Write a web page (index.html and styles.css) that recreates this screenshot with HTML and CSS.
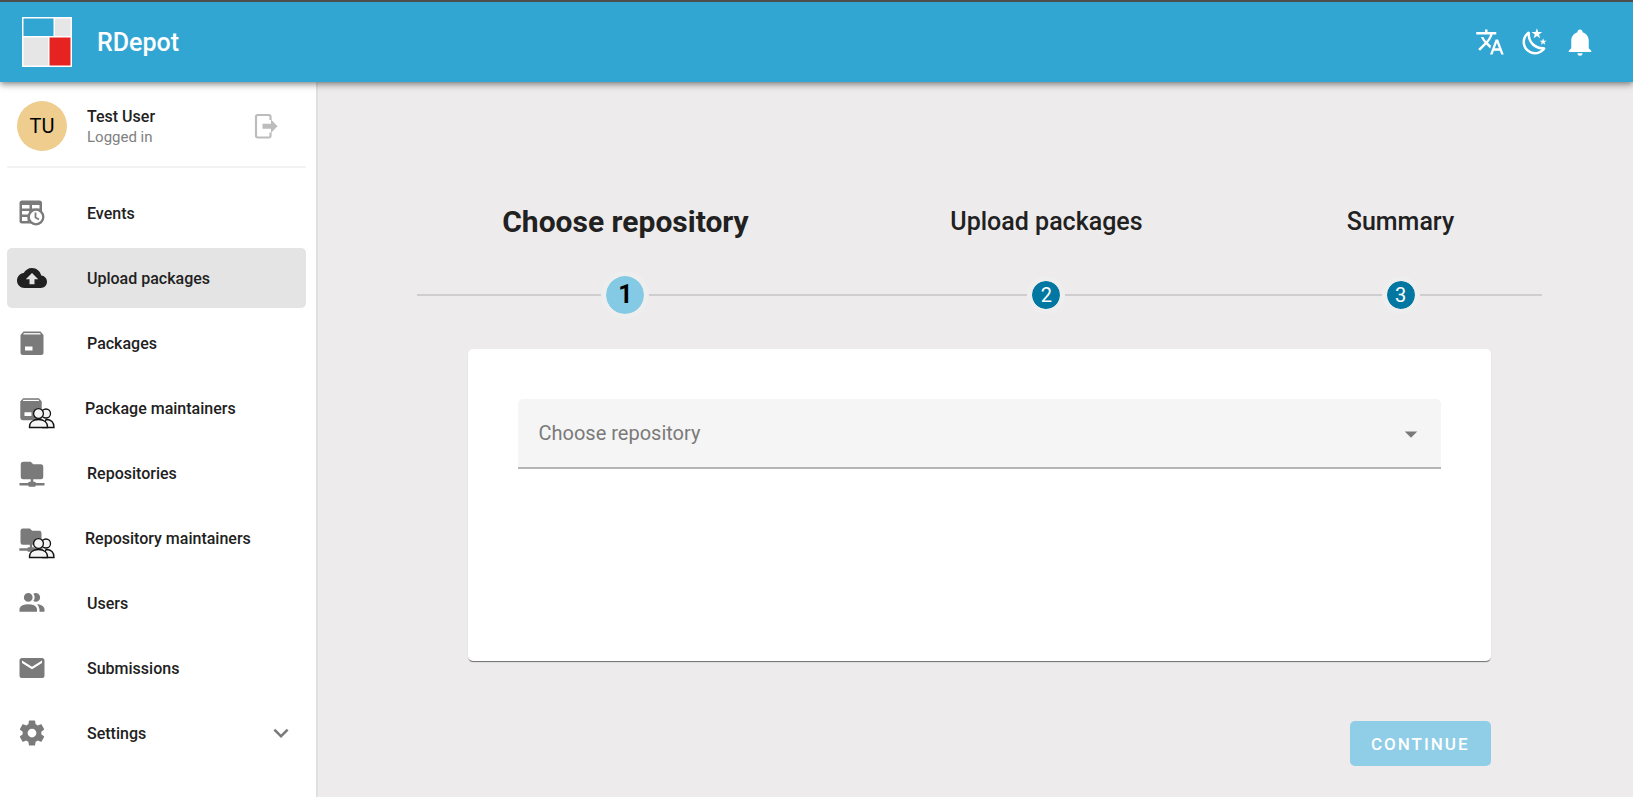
FILE: index.html
```html
<!DOCTYPE html>
<html lang="en">
<head>
  <meta charset="UTF-8">
  <meta name="viewport" content="width=device-width, initial-scale=1.0">
  <title>RDepot</title>
  <link rel="stylesheet" href="styles.css">
</head>
<body>

  <!-- shapes used by more than one icon -->
  <svg class="sprite" aria-hidden="true">
    <symbol id="box" viewBox="0 0 30 30">
      <path d="M6.5 3.5H23.5L26.5 7V24.500A2.500 2.500 0 0 1 24 27H6A2.500 2.500 0 0 1 3.500 24.500V7Z"/>
      <path d="M6.500 5.800H23.500" stroke="#fff" stroke-width="1.300"/>
      <path d="M8 18.500H15.500V22.500H8Z" fill="#fff"/>
    </symbol>
    <symbol id="folder" viewBox="0 0 24 24">
      <path d="M3 15V5A2 2 0 0 1 5 3H11L13 5H19A2 2 0 0 1 21 7V15A2 2 0 0 1 19 17H13V19H14A1 1 0 0 1 15 20H22V22H15A1 1 0 0 1 14 23H10A1 1 0 0 1 9 22H2V20H9A1 1 0 0 1 10 19H11V17H5A2 2 0 0 1 3 15Z"/>
    </symbol>
    <symbol id="people" viewBox="0 0 28 22">
      <g fill="#f5f5f5" stroke="#111" stroke-width="1.300">
        <circle cx="18" cy="6.500" r="4.500"/>
        <path d="M15 20.500H26C26 16 23.500 12.500 18 12.500Z"/>
        <circle cx="10.500" cy="6.500" r="4.900"/>
        <path d="M1.500 20.500C1 15.500 5 12.500 10.500 12.500S20 15.500 19.500 20.500Z"/>
      </g>
    </symbol>
  </svg>

  <header class="app-bar">
    <svg class="logo" viewBox="0 0 50 50" aria-hidden="true">
      <rect width="50" height="50" fill="#fff"/>
      <rect x="1.500" y="1.500" width="30" height="17.500" fill="#32a6d3"/>
      <rect x="33" y="1.500" width="15.500" height="17.500" fill="#e6e6e6"/>
      <rect x="1.500" y="20.500" width="24.500" height="28" fill="#e6e6e6"/>
      <rect x="27.500" y="20.500" width="21" height="28" fill="#e52421"/>
    </svg>
    <h1 class="app-title">RDepot</h1>
    <div class="app-actions">
      <button class="icon-button" type="button" aria-label="Change language">
        <svg class="icon" viewBox="0 0 24 24"><path d="M12.870 15.070L10.330 12.560L10.360 12.530C12.100 10.590 13.340 8.360 14.070 6H17V4H10V2H8V4H1V6H12.170C11.500 7.920 10.440 9.750 9 11.350C8.070 10.320 7.300 9.190 6.690 8H4.690C5.420 9.630 6.420 11.170 7.670 12.560L2.580 17.580L4 19L9 14L12.110 17.110L12.870 15.070M18.500 10H16.500L12 22H14L15.120 19H19.870L21 22H23L18.500 10M15.880 17L17.500 12.670L19.120 17H15.880Z"/></svg>
      </button>
      <button class="icon-button" type="button" aria-label="Dark mode">
        <svg class="icon" viewBox="0 0 24 24"><path d="M17.750 4.090L15.220 6.030L16.130 9.090L13.500 7.280L10.870 9.090L11.780 6.030L9.250 4.090L12.440 4L13.500 1L14.560 4L17.750 4.090M21.250 11L19.610 12.250L20.200 14.230L18.500 13.060L16.800 14.230L17.390 12.250L15.750 11L17.810 10.950L18.500 9L19.190 10.950L21.250 11M18.970 15.950C19.800 15.870 20.690 17.050 20.160 17.800C19.840 18.250 19.500 18.670 19.080 19.070C15.170 23 8.840 23 4.940 19.070C1.030 15.170 1.030 8.830 4.940 4.930C5.340 4.530 5.760 4.170 6.210 3.850C6.960 3.320 8.140 4.210 8.060 5.040C7.790 7.900 8.750 10.870 10.950 13.060C13.140 15.260 16.100 16.220 18.970 15.950M17.330 17.970C14.500 17.810 11.700 16.640 9.530 14.500C7.360 12.310 6.200 9.500 6.040 6.680C3.230 9.820 3.340 14.640 6.350 17.660C9.370 20.670 14.190 20.780 17.330 17.970Z"/></svg>
      </button>
      <button class="icon-button" type="button" aria-label="Notifications">
        <svg class="icon" viewBox="0 0 24 24"><path d="M21 19V20H3V19L5 17V11C5 7.900 7.030 5.170 10 4.290V4A2 2 0 0 1 14 4V4.290C16.970 5.170 19 7.900 19 11V17L21 19M14 21A2 2 0 0 1 10 21"/></svg>
      </button>
    </div>
  </header>

  <div class="layout">
    <aside class="sidebar">
      <div class="user">
        <span class="avatar">TU</span>
        <div class="user-text">
          <span class="user-name">Test User</span>
          <span class="user-status">Logged in</span>
        </div>
        <button class="icon-button logout" type="button" aria-label="Log out">
          <svg class="icon" viewBox="0 0 30 30">
            <path d="M19.500 9V5.500A1.500 1.500 0 0 0 18 4H6.500A1.500 1.500 0 0 0 5 5.500V25A1.500 1.500 0 0 0 6.500 26.500H18A1.500 1.500 0 0 0 19.500 25V21.500" fill="none" stroke="currentColor" stroke-width="2.200"/>
            <path d="M11.500 12.700H20V8.500L26.500 15.200L20 22V17.700H11.500Z"/>
          </svg>
        </button>
      </div>

      <nav class="menu">
        <a class="menu-item" href="#events">
          <svg class="icon" viewBox="0 0 30 30">
            <path d="M2.500 5A2.500 2.500 0 0 1 5 2.500H22.500A2.500 2.500 0 0 1 25 5V19H19V25.500H5A2.500 2.500 0 0 1 2.500 23Z"/>
            <path d="M5 7H12.500V10.500H5ZM15 7H22.500V10.500H15ZM5 13H12V16.500H5ZM5 19H10.500V23H5Z" fill="#fff"/>
            <circle cx="19" cy="19" r="8" fill="#fff"/>
            <circle cx="19" cy="19" r="7.300" fill="none" stroke="currentColor" stroke-width="2.300"/>
            <path d="M18.500 14.500V19.500L22 21.500" fill="none" stroke="currentColor" stroke-width="1.800"/>
          </svg>
          <span class="menu-text">Events</span>
        </a>
        <a class="menu-item active" href="#upload" aria-current="page">
          <svg class="icon" viewBox="0 0 24 24"><path d="M19.350 10.040C18.670 6.590 15.640 4 12 4 9.110 4 6.600 5.640 5.350 8.040 2.340 8.360 0 10.910 0 14c0 3.310 2.690 6 6 6h13c2.760 0 5-2.240 5-5 0-2.640-2.050-4.780-4.650-4.960zM14 13v4h-4v-4H7l5-5 5 5h-3z"/></svg>
          <span class="menu-text">Upload packages</span>
        </a>
        <a class="menu-item" href="#packages">
          <svg class="icon"><use href="#box"/></svg>
          <span class="menu-text">Packages</span>
        </a>
        <a class="menu-item" href="#package-maintainers">
          <span class="icon-pair">
            <svg class="icon-main"><use href="#box"/></svg>
            <svg class="icon-badge"><use href="#people"/></svg>
          </span>
          <span class="menu-text">Package maintainers</span>
        </a>
        <a class="menu-item" href="#repositories">
          <svg class="icon"><use href="#folder"/></svg>
          <span class="menu-text">Repositories</span>
        </a>
        <a class="menu-item" href="#repository-maintainers">
          <span class="icon-pair">
            <svg class="icon-main"><use href="#folder"/></svg>
            <svg class="icon-badge"><use href="#people"/></svg>
          </span>
          <span class="menu-text">Repository maintainers</span>
        </a>
        <a class="menu-item" href="#users">
          <svg class="icon" viewBox="0 0 24 24"><path d="M16 17V19H2V17S2 13 9 13 16 17 16 17M12.500 7.500A3.500 3.500 0 1 0 9 11A3.500 3.500 0 0 0 12.500 7.500M15.940 13A5.320 5.320 0 0 1 18 17V19H22V17S22 13.370 15.940 13M15 4A3.390 3.390 0 0 0 13.070 4.590A5 5 0 0 1 13.070 10.410A3.390 3.390 0 0 0 15 11A3.500 3.500 0 0 0 15 4Z"/></svg>
          <span class="menu-text">Users</span>
        </a>
        <a class="menu-item" href="#submissions">
          <svg class="icon" viewBox="0 0 24 24"><path d="M20 8L12 13L4 8V6L12 11L20 6M20 4H4C2.890 4 2 4.890 2 6V18A2 2 0 0 0 4 20H20A2 2 0 0 0 22 18V6C22 4.890 21.100 4 20 4Z"/></svg>
          <span class="menu-text">Submissions</span>
        </a>
        <a class="menu-item" href="#settings">
          <svg class="icon" viewBox="0 0 24 24"><path d="M12 15.500A3.500 3.500 0 0 1 8.500 12A3.500 3.500 0 0 1 12 8.500A3.500 3.500 0 0 1 15.500 12A3.500 3.500 0 0 1 12 15.500M19.430 12.970C19.470 12.650 19.500 12.330 19.500 12C19.500 11.670 19.470 11.340 19.430 11L21.540 9.370C21.730 9.220 21.780 8.950 21.660 8.730L19.660 5.270C19.540 5.050 19.270 4.960 19.050 5.050L16.560 6.050C16.040 5.660 15.500 5.320 14.870 5.070L14.500 2.420C14.460 2.180 14.250 2 14 2H10C9.750 2 9.540 2.180 9.500 2.420L9.130 5.070C8.500 5.320 7.960 5.660 7.440 6.050L4.950 5.050C4.730 4.960 4.460 5.050 4.340 5.270L2.340 8.730C2.210 8.950 2.270 9.220 2.460 9.370L4.570 11C4.530 11.340 4.500 11.670 4.500 12C4.500 12.330 4.530 12.650 4.570 12.970L2.460 14.630C2.270 14.780 2.210 15.050 2.340 15.270L4.340 18.730C4.460 18.950 4.730 19.030 4.950 18.950L7.440 17.940C7.960 18.340 8.500 18.680 9.130 18.930L9.500 21.580C9.540 21.820 9.750 22 10 22H14C14.250 22 14.460 21.820 14.500 21.580L14.870 18.930C15.500 18.670 16.040 18.340 16.560 17.940L19.050 18.950C19.270 19.030 19.540 18.950 19.660 18.730L21.660 15.270C21.780 15.050 21.730 14.780 21.540 14.630L19.430 12.970Z"/></svg>
          <span class="menu-text">Settings</span>
          <svg class="icon chevron" viewBox="0 0 24 24"><path d="M7.410 8.580L12 13.170L16.590 8.580L18 10L12 16L6 10L7.410 8.580Z"/></svg>
        </a>
      </nav>
    </aside>

    <main class="content">
      <div class="stepper">
        <ol class="steps">
          <li class="step current">
            <span class="step-title">Choose repository</span>
            <span class="step-track"><span class="step-badge">1</span></span>
          </li>
          <li class="step">
            <span class="step-title">Upload packages</span>
            <span class="step-track"><span class="step-badge">2</span></span>
          </li>
          <li class="step">
            <span class="step-title">Summary</span>
            <span class="step-track"><span class="step-badge">3</span></span>
          </li>
        </ol>

        <form class="step-form">
          <div class="card">
            <div class="field">
              <select class="field-select" aria-label="Choose repository">
                <option>Choose repository</option>
              </select>
              <svg class="icon field-arrow" viewBox="0 0 24 24"><path d="M7 10L12 15L17 10H7Z"/></svg>
            </div>
          </div>
          <button class="continue" type="button">CONTINUE</button>
        </form>
      </div>
    </main>
  </div>

</body>
</html>
```
FILE: styles.css
```css
* {
  box-sizing: border-box;
}

body {
  margin: 0;
  min-height: 100vh;
  display: flex;
  flex-direction: column;
  background-color: #edebec;
  color: #212121;
  font-family: Roboto, sans-serif;
  font-size: 16px;
}

.sprite {
  display: none;
}

.icon {
  width: 30px;
  height: 30px;
  flex: none;
  fill: currentColor;
}

.icon-button {
  display: flex;
  padding: 0;
  border: 0;
  background: none;
  color: inherit;
  cursor: pointer;
}

/* top bar */
.app-bar {
  display: flex;
  align-items: center;
  height: 82px;
  padding: 0 38px 0 22px;
  border-top: 2px solid #4d4d4d;
  background-color: #32a6d3;
  color: #fff;
  box-shadow: 0 2px 5px -1px rgba(0, 0, 0, 0.3), 0 4px 6px rgba(0, 0, 0, 0.15), 0 1px 10px rgba(0, 0, 0, 0.15);
  z-index: 1;
}

.logo {
  width: 50px;
  height: 50px;
}

.app-title {
  margin: 0 0 0 25px;
  font-size: 25px;
  font-weight: 500;
}

.app-actions {
  display: flex;
  gap: 15px;
  margin-left: auto;
}

.layout {
  display: flex;
  flex: 1;
}

/* sidebar */
.sidebar {
  width: 318px;
  flex: none;
  padding: 0 10px 0 7px;
  border-right: 2px solid #e0e0e0;
  background-color: #fff;
}

.user {
  display: flex;
  align-items: center;
  height: 86px;
  padding: 4px 25px 0 10px;
  border-bottom: 2px solid #f3f3f3;
}

.avatar {
  width: 50px;
  height: 50px;
  border-radius: 50%;
  background-color: #eecd8f;
  color: #000;
  font-size: 20px;
  line-height: 50px;
  text-align: center;
}

.user-text {
  display: flex;
  flex-direction: column;
  margin-left: 20px;
  padding-top: 2px;
  line-height: 20px;
}

.user-name {
  font-weight: 500;
}

.user-status {
  color: #808080;
  font-size: 15px;
}

.logout {
  margin-left: auto;
  color: #bcbcbc;
}

.menu {
  display: flex;
  flex-direction: column;
  gap: 5px;
  padding-top: 15px;
}

.menu-item {
  display: flex;
  align-items: center;
  height: 60px;
  padding: 0 10px;
  border-radius: 5px;
  color: #7a7a7a;
  text-decoration: none;
}

.menu-item.active {
  background-color: #e4e4e4;
  color: #212121;
}

.menu-text {
  margin-left: 40px;
  color: #212121;
  font-weight: 500;
}

.icon-pair {
  position: relative;
  width: 28px;
  height: 30px;
  padding-top: 2px;
  fill: currentColor;
}

.icon-main {
  display: block;
  width: 28px;
  height: 28px;
}

.icon-badge {
  position: absolute;
  left: 11px;
  top: 14px;
  width: 28px;
  height: 22px;
}

.chevron {
  margin-left: auto;
}

/* upload wizard */
.content {
  flex: 1;
  display: flex;
  flex-direction: column;
  align-items: center;
  padding: 118px 0 30px 8px;
}

.stepper {
  width: 86%;
}

.steps {
  display: grid;
  grid-template-columns: 208fr 213fr 141fr;
  margin: 0 0 30px;
  padding: 0;
  list-style: none;
}

.step {
  display: flex;
  flex-direction: column;
  gap: 27px;
}

.step-title {
  font-size: 25px;
  font-weight: 500;
  line-height: 44px;
  text-align: center;
}

/* line, badge, line */
.step-track {
  display: flex;
  align-items: center;
  height: 48px;
}

.step-track::before,
.step-track::after {
  content: "";
  flex: 1;
  height: 2px;
  background-color: #cfcecf;
}

.step-badge {
  width: 38px;
  height: 38px;
  border: 5px solid #eee;
  border-radius: 50%;
  background-color: #0277a2;
  background-clip: padding-box;
  color: #fff;
  font-size: 20px;
  line-height: 28px;
  text-align: center;
}

.current .step-title {
  font-size: 30px;
  font-weight: 700;
}

.current .step-badge {
  width: 48px;
  height: 48px;
  background-color: #84cae4;
  color: #000;
  font-size: 25px;
  font-weight: 700;
  line-height: 38px;
}

.step-form {
  display: flex;
  flex-direction: column;
  padding: 0 51px;
}

.card {
  min-height: 312px;
  padding: 50px;
  border-radius: 5px;
  background-color: #fff;
  box-shadow: 0 2px 1px -1px rgba(0, 0, 0, 0.4), 0 1px 1px rgba(0, 0, 0, 0.2);
}

.field {
  display: grid;
  align-items: center;
}

.field-select,
.field-arrow {
  grid-area: 1 / 1;
}

.field-select {
  appearance: none;
  width: 100%;
  height: 70px;
  padding: 0 20px;
  border: 0;
  border-bottom: 2px solid #b5b5b5;
  border-radius: 5px 5px 0 0;
  background-color: #f5f5f5;
  color: #7a7a7a;
  font-family: inherit;
  font-size: 20px;
}

.field-arrow {
  justify-self: end;
  margin-right: 15px;
  color: #7a7a7a;
  pointer-events: none;
}

.continue {
  align-self: flex-end;
  height: 45px;
  margin-top: 60px;
  padding: 0 21px;
  border: 0;
  border-radius: 5px;
  background-color: #90cee7;
  color: #fff;
  font-family: inherit;
  font-size: 17px;
  font-weight: 500;
  letter-spacing: 2px;
  cursor: pointer;
}
```
